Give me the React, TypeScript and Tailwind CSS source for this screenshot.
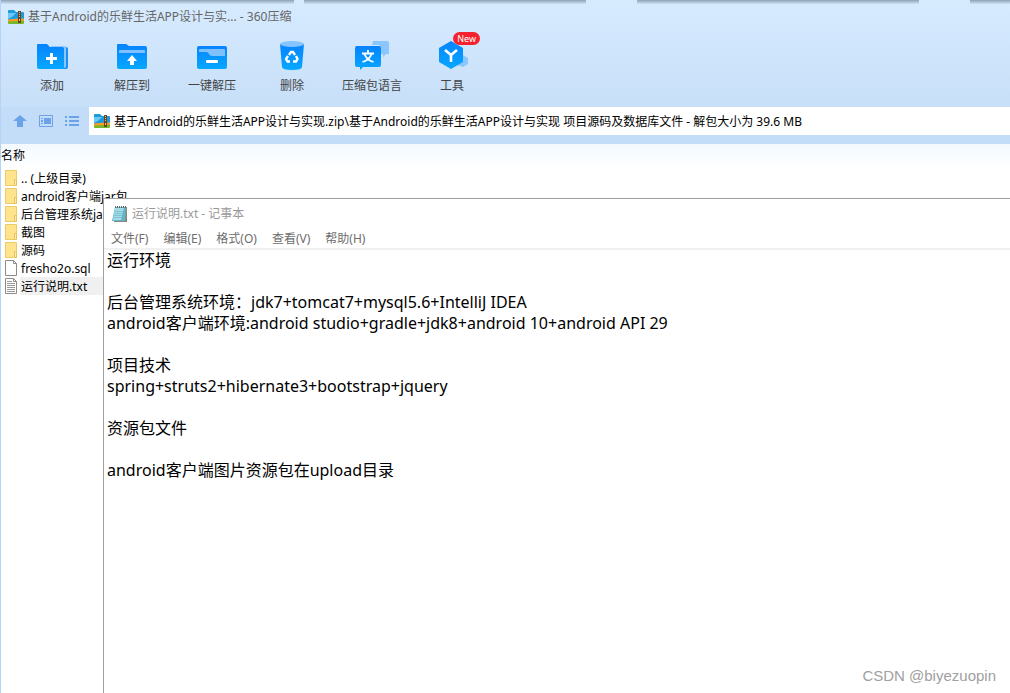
import React from "react";

const notes = `运行环境

后台管理系统环境：jdk7+tomcat7+mysql5.6+IntelliJ IDEA
android客户端环境:android studio+gradle+jdk8+android 10+android API 29

项目技术
spring+struts2+hibernate3+bootstrap+jquery

资源包文件

android客户端图片资源包在upload目录`;

function Gradient({ id }: { id: string }) {
  return (
    <defs>
      <linearGradient id={id} x1="0" y1="0" x2="0" y2="1">
        <stop offset="0" stopColor="#0683ff" />
        <stop offset="1" stopColor="#06a8ff" />
      </linearGradient>
    </defs>
  );
}

function AddIcon() {
  return (
    <svg width="36" height="32" viewBox="0 0 36 32">
      <Gradient id="add" />
      <path d="M28 7h4a2 2 0 0 1 2 2v18a2 2 0 0 1-2 2h-4z" fill="#1a90fb" />
      <path d="M17 6h13a2 2 0 0 1 2 2v19l-2 1z" fill="#8cc6ff" />
      <path d="M3 5a1 1 0 0 1 1-1h9l3 3h12a2 2 0 0 1 2 2v20H5a2 2 0 0 1-2-2z" fill="url(#add)" />
      <path d="M16 13h3v4h4v3h-4v4h-3v-4h-4v-3h4z" fill="#fff" />
    </svg>
  );
}

function ExtractIcon() {
  return (
    <svg width="36" height="32" viewBox="0 0 36 32">
      <Gradient id="extract" />
      <path d="M3 5a1 1 0 0 1 1-1h8l3 2h16a2 2 0 0 1 2 2v19a2 2 0 0 1-2 2H5a2 2 0 0 1-2-2z" fill="url(#extract)" />
      <path d="M5 13v-2q0-1 1-1h24q1 0 1 1v2z" fill="#7fc1ff" />
      <path d="M18 15l5 6h-3v4h-4v-4h-3z" fill="#fff" />
    </svg>
  );
}

function OneKeyIcon() {
  return (
    <svg width="36" height="32" viewBox="0 0 36 32">
      <Gradient id="onekey" />
      <rect x="3" y="6" width="30" height="23" rx="2" fill="url(#onekey)" />
      <path d="M5 12v-2q0-1 1-1h24q1 0 1 1v6H18q-2 0-3-2t-3-2z" fill="#7fc1ff" />
      <rect x="12" y="20" width="12" height="3" rx="1" fill="#fff" />
    </svg>
  );
}

function DeleteIcon() {
  return (
    <svg width="36" height="32" viewBox="0 0 36 32">
      <Gradient id="delete" />
      <path d="M6 4h24l-2 23q0 3-10 3T8 27z" fill="url(#delete)" />
      <ellipse cx="18" cy="4" rx="12" ry="3" fill="#85c4ff" />
      <g fill="none" stroke="#fff" strokeWidth="2.4">
        <path d="M15 15l2-3h2l2 3" />
        <path d="M22 16l1.500 3-1.500 2.500h-3" />
        <path d="M16 21.500h-2.500l-1.500-2.500 2-3" />
      </g>
    </svg>
  );
}

function LanguageIcon() {
  return (
    <svg width="36" height="32" viewBox="-1 0 36 32">
      <Gradient id="language" />
      <path d="M18 1h14a2 2 0 0 1 2 2v11h-3l-3 3v-3h-2V8l-2-3h-7z" fill="#8cc6ff" />
      <path d="M1 6h23a2 2 0 0 1 2 2v17a2 2 0 0 1-2 2H8l-3 3v-3H2a2 2 0 0 1-2-2V8z" fill="url(#language)" />
      <g fill="none" stroke="#fff" strokeWidth="1.800">
        <path d="M13 10v3M7 13.500h12M9.500 14q2 6 9 8M16.500 14q-2 6-9 8" />
      </g>
    </svg>
  );
}

function ToolsIcon() {
  return (
    <svg width="36" height="32" viewBox="0 0 36 32">
      <Gradient id="tools" />
      <path d="M29 15l5 3v6l-5 3-6-2v-6z" fill="#8cc6ff" />
      <path d="M17 1l12 7v14l-12 7L5 22V8z" fill="url(#tools)" />
      <path d="M11 10l6 5 6-5M17 15v7" fill="none" stroke="#fff" strokeWidth="2.600" />
    </svg>
  );
}

const tools = [
  { label: "添加", icon: <AddIcon /> },
  { label: "解压到", icon: <ExtractIcon /> },
  { label: "一键解压", icon: <OneKeyIcon /> },
  { label: "删除", icon: <DeleteIcon /> },
  { label: "压缩包语言", icon: <LanguageIcon /> },
  { label: "工具", icon: <ToolsIcon />, badge: "New" },
];

function ZipIcon() {
  return (
    <svg width="16" height="16" viewBox="0 0 16 16" className="shrink-0">
      <path d="M0 2q0-1 1-1h5l2 2h7q1 0 1 1v7H0z" fill="#1c9ade" />
      <path d="M0 4h8l-4 4-4 2z" fill="#6cc8f5" />
      <path d="M0 10.500q8-1 16-1V13H0z" fill="#ff9d23" />
      <path d="M0 12.500q8 0 16-1V14q0 1-1 1H1q-1 0-1-1z" fill="#74b82b" />
      <path d="M10 2h3v12h-3z" fill="#6f431f" />
      <path d="M11 3h1v1h-1zM11 5h1v1h-1zM11 7h1v1h-1zM11 10h1v2h-1z" fill="#e9bd74" />
    </svg>
  );
}

function FolderIcon() {
  return (
    <svg width="14" height="18" viewBox="0 0 14 18">
      <path d="M1.500 1.500h11v15h-11z" fill="#ffe38d" stroke="#edcb66" />
      <path d="M10.500 16.500v-6h2v6z" fill="#ffedab" stroke="#e9c355" />
    </svg>
  );
}

function FileIcon({ lined }: { lined?: boolean }) {
  return (
    <svg width="14" height="18" viewBox="0 0 14 18">
      <path d="M1.500 1.500h8l3 3v12h-11z" fill="#fff" stroke="#8c8c8c" />
      <path d="M9.500 1.500v3h3" fill="none" stroke="#8c8c8c" />
      {lined && <path d="M3 4.500h5M3 6.500h8M3 8.500h8M3 10.500h8M3 12.500h8M3 14.500h8" stroke="#9a9a9a" />}
    </svg>
  );
}

const files = [
  { name: ".. (上级目录)", icon: <FolderIcon /> },
  { name: "android客户端jar包", icon: <FolderIcon /> },
  { name: "后台管理系统jar包", icon: <FolderIcon /> },
  { name: "截图", icon: <FolderIcon /> },
  { name: "源码", icon: <FolderIcon /> },
  { name: "fresho2o.sql", icon: <FileIcon /> },
  { name: "运行说明.txt", icon: <FileIcon lined />, selected: true },
];

function NotepadIcon() {
  return (
    <svg width="16" height="18" viewBox="0 0 16 18">
      <path d="M4 2h11v15H2z" fill="#85887a" />
      <path d="M3 2h11l-1 14H0z" fill="#62b6cb" />
      <path d="M3 3h9l-3 12H1z" fill="#a2dbe6" />
      <path d="M3 6.500h9M3 8.500h9M2 10.500h9M2 12.500h9" stroke="#5cadc2" strokeWidth="0.500" />
      <path d="M3.500 1v2M5.500 1v2M7.500 1v2M9.500 1v2M11.500 1v2M13.500 1v2" stroke="#666" />
    </svg>
  );
}

function Notepad() {
  return (
    <section className="absolute top-[198px] left-[102px] right-0 bottom-0 flex flex-col bg-white border-t border-l border-[#a0a0a0]">
      <div className="flex items-center gap-1 h-[29px] pl-2 text-[#999]">
        <NotepadIcon />
        <h2>运行说明.txt - 记事本</h2>
      </div>
      <div className="flex gap-[15px] h-[22px] pt-[2px] pl-[7px] border-b-2 border-[#f0f0f0] text-[#6d6d6d]">
        <button>文件(F)</button>
        <button>编辑(E)</button>
        <button>格式(O)</button>
        <button>查看(V)</button>
        <button>帮助(H)</button>
      </div>
      <textarea
        aria-label="运行说明.txt"
        spellCheck={false}
        defaultValue={notes}
        className="flex-1 resize-none outline-none pl-[3px] text-base leading-[21px] text-black"
      />
      <p className="absolute right-[14px] bottom-[7px] text-[15px] font-['Liberation_Sans',sans-serif] text-[#a0a0a0]">
        CSDN @biyezuopin
      </p>
    </section>
  );
}

function App() {
  return (
    <div
      lang="zh-CN"
      className="relative flex flex-col min-h-screen overflow-hidden border-l border-[#b4d4f7] bg-white text-xs text-black font-['Noto_Sans','Noto_Sans_CJK_SC',sans-serif]"
    >
      <header className="bg-linear-to-b from-[#d7ebff] to-[#c7dff8]">
        <div className="flex h-1">
          <div className="w-[29%] bg-linear-to-b from-[#8fa2b5] to-[#cfe3f7]" />
          <div className="w-[1%]" />
          <div className="w-[28%] bg-linear-to-b from-[#8fa2b5] to-[#cfe3f7]" />
          <div className="w-[5%]" />
          <div className="flex-1 bg-linear-to-b from-[#8fa2b5] to-[#cfe3f7]" />
          <div className="w-[5%]" />
          <div className="w-[4%] bg-linear-to-b from-[#8fa2b5] to-[#cfe3f7]" />
        </div>
        <div className="flex items-center gap-1 h-[26px] pl-[7px] text-[#666]">
          <ZipIcon />
          <h1>基于Android的乐鲜生活APP设计与实... - 360压缩</h1>
        </div>
        <nav className="flex h-[77px] pt-[10px] pl-[11px] text-[#444]">
          {tools.map((tool) => (
            <button key={tool.label} className="relative flex flex-col items-center w-20 gap-[6px]">
              {tool.icon}
              <span>{tool.label}</span>
              {tool.badge && (
                <span className="absolute -top-2 right-3 px-1 h-[13px] rounded-full bg-[#f5222d] text-[9px] leading-[13px] text-white">
                  {tool.badge}
                </span>
              )}
            </button>
          ))}
        </nav>
      </header>
      <div className="flex items-center h-[37px] pb-[9px] bg-[#c3ddf8]">
        <div className="flex items-center gap-[10px] w-[88px] pl-[11px] text-[#6ba3ea]">
          <button aria-label="向上">
            <svg width="16" height="14" viewBox="0 0 16 14" fill="currentColor">
              <path d="M8 1l7 6h-4v6H5V7H1z" />
            </svg>
          </button>
          <button aria-label="预览">
            <svg width="16" height="14" viewBox="0 0 16 14" fill="currentColor">
              <path d="M1.500 1.500h13v11h-13z" fill="none" stroke="currentColor" />
              <path d="M6 4h7v6H6zM3 4h2v1H3zM3 6h2v2H3zM3 9h2v1H3z" />
            </svg>
          </button>
          <button aria-label="列表">
            <svg width="16" height="14" viewBox="0 0 16 14" fill="currentColor">
              <path d="M1 2h2v2H1zM1 6h2v2H1zM1 10h2v2H1zM5 2h10v2H5zM5 6h10v2H5zM5 10h10v2H5z" />
            </svg>
          </button>
        </div>
        <div className="flex items-center gap-1 flex-1 h-7 pl-[5px] bg-white">
          <ZipIcon />
          <input
            aria-label="路径"
            className="flex-1 min-w-0 pt-[2px] outline-none"
            defaultValue="基于Android的乐鲜生活APP设计与实现.zip\基于Android的乐鲜生活APP设计与实现 项目源码及数据库文件 - 解包大小为 39.6 MB"
          />
        </div>
      </div>
      <table className="w-full border-collapse">
        <thead>
          <tr>
            <th className="h-[25px] p-0 pb-[2px] text-left font-normal bg-linear-to-b from-[#f3f9ff] to-white">名称</th>
          </tr>
        </thead>
        <tbody>
          {files.map((file) => (
            <tr key={file.name}>
              <td className="p-0">
                <div className="flex items-center gap-[2px] h-[18px] pl-[3px] whitespace-nowrap">
                  {file.icon}
                  <span
                    className={
                      file.selected ? "w-[85px] h-[18px] pt-[2px] pl-px bg-[#f0f0f0]" : "h-[18px] pt-[2px] pl-px"
                    }
                  >
                    {file.name}
                  </span>
                </div>
              </td>
            </tr>
          ))}
        </tbody>
      </table>
      <Notepad />
    </div>
  );
}

export default App;
